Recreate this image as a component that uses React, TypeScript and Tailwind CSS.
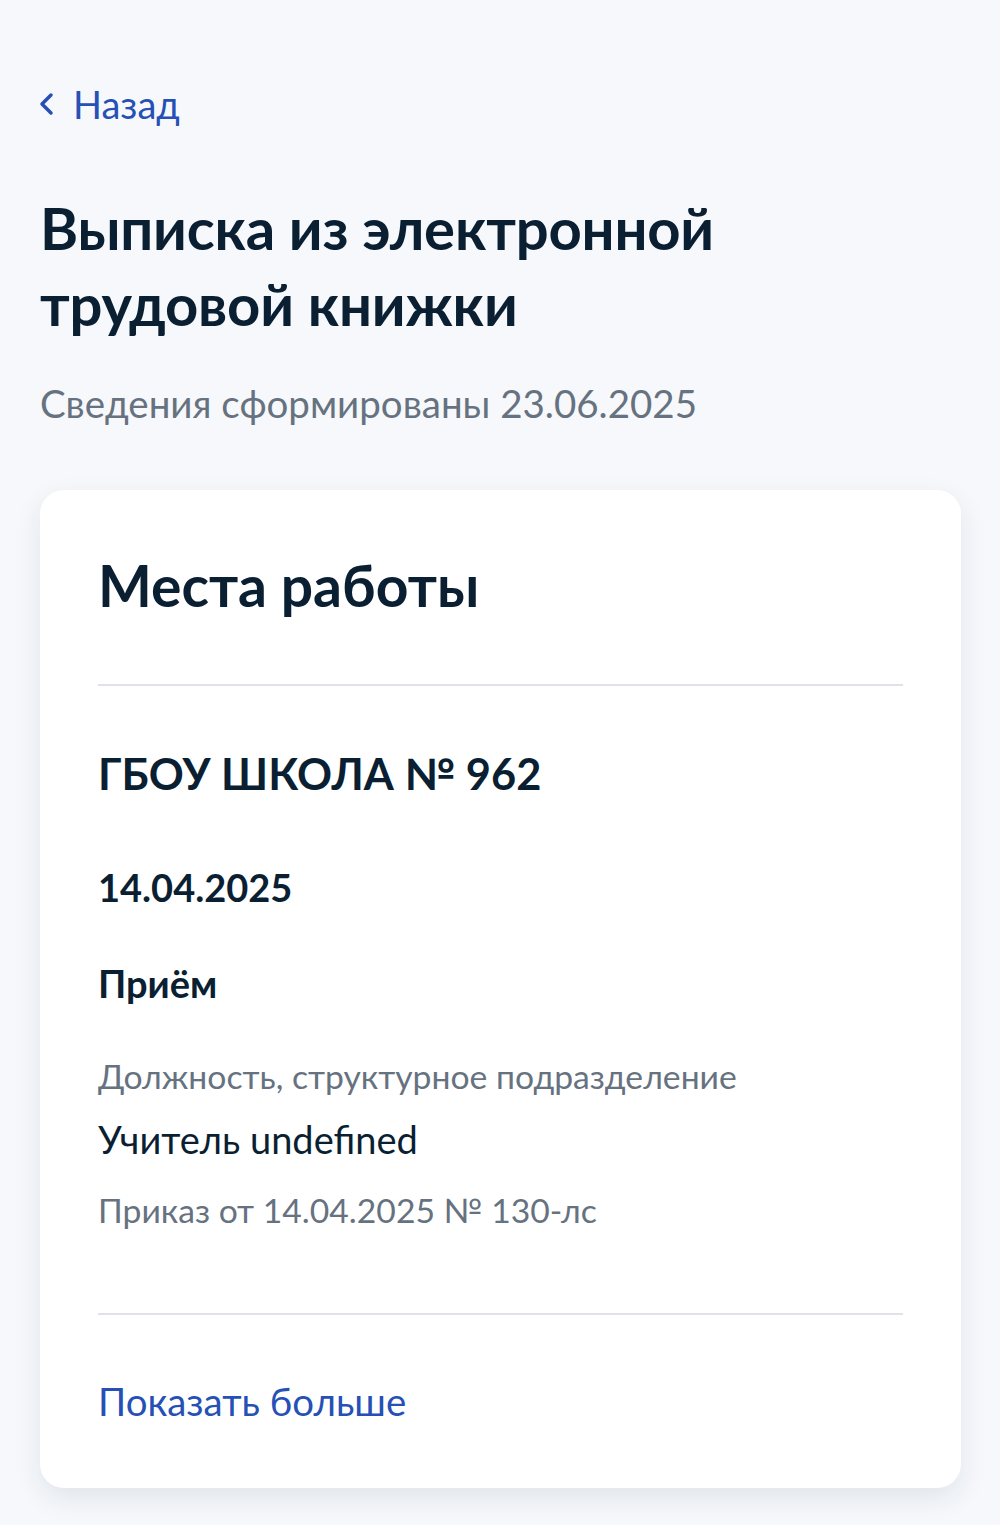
const font = { fontFamily: 'Lato, "Noto Sans", sans-serif' };

export default function App() {
  return (
    <div className="min-h-[1525px] w-[1000px] bg-[#f6f8fb] px-10 pt-[82px] text-[#0b1f33]" style={font}>
      {/* Back link */}
      <a href="#" className="flex items-center text-[38px] leading-[44px] text-[#2650b5]">
        <svg width="16" height="24" viewBox="0 0 16 24" fill="none" className="-ml-[2px]">
          <polyline points="13,3 4,12 13,21" stroke="currentColor" strokeWidth="3.5" strokeLinecap="round" strokeLinejoin="round" />
        </svg>
        <span className="ml-[19px]">Назад</span>
      </a>

      <h1 className="mt-[64px] text-[58px] font-bold leading-[76px] tracking-[-0.2px]">
        Выписка из электронной
        <br />
        трудовой книжки
      </h1>
      <p className="mt-[37px] text-[38.5px] leading-[48px] text-[#66727f]">Сведения сформированы 23.06.2025</p>

      {/* Card */}
      <div className="mt-[63px] w-[921px] rounded-[24px] bg-white px-[58px] pt-[60px] pb-[63px] shadow-[0_10px_28px_rgba(16,40,80,0.09)]">
        <h2 className="text-[57px] font-bold leading-[70px]">Места работы</h2>
        <div className="mt-[64px] h-[2px] bg-[#dfe2e6]" />

        <h3 className="mt-[59px] text-[43.4px] font-bold leading-[56px]">ГБОУ ШКОЛА № 962</h3>
        <p className="mt-[62px] text-[38px] font-bold leading-[48px]">14.04.2025</p>
        <p className="mt-[48px] text-[38px] font-bold leading-[48px]">Приём</p>

        <p className="mt-[47px] text-[33.7px] leading-[44px] text-[#66727f]">Должность, структурное подразделение</p>
        <p className="mt-[17px] text-[38px] leading-[48px]">Учитель undefined</p>
        <p className="mt-[25px] text-[33.7px] leading-[44px] text-[#66727f]">Приказ от 14.04.2025 № 130-лс</p>

        <div className="mt-[81px] h-[2px] bg-[#dfe2e6]" />

        <button className="mt-[62px] text-[38.4px] leading-[48px] text-[#2650b5]">Показать больше</button>
      </div>
    </div>
  );
}
